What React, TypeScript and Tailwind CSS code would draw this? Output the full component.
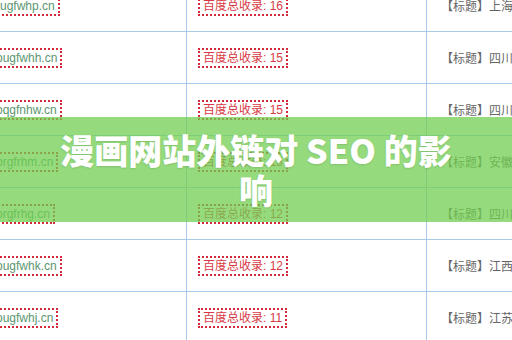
const rows = [
  { domain: "rugfwhp.cn", count: 16, title: "上海漫画网站外链" },
  { domain: "ougfwhh.cn", count: 15, title: "四川漫画网站外链" },
  { domain: "oqgfnhw.cn", count: 15, title: "四川漫画网站外链" },
  { domain: "orgfrhm.cn", count: 13, title: "安徽漫画网站外链" },
  { domain: "orgfrhg.cn", count: 12, title: "四川漫画网站外链" },
  { domain: "ougfwhk.cn", count: 12, title: "江西漫画网站外链" },
  { domain: "ougfwhj.cn", count: 11, title: "江苏漫画网站外链" },
]

export default function App() {
  return (
    <div className="relative w-[512px] h-[340px] overflow-hidden bg-white font-['Liberation_Sans','Noto_Sans_CJK_SC',sans-serif]">
      <div className="-mt-[20px] flex flex-col">
        {rows.map((row, i) => (
          <div key={i} className="grid grid-cols-[187px_240px_1fr] h-[52px] border-b border-[#a9c9ea]">
            <div className="flex items-center overflow-hidden border-r border-[#a9c9ea]">
              <span className="-ml-[9px] border-2 border-dotted border-[#d3293b] px-[3px] text-[12px] leading-[16px] text-[#5c956f] whitespace-nowrap">
                {row.domain}
              </span>
            </div>
            <div className="flex items-center pl-[11px] border-r border-[#a9c9ea]">
              <span className="border-2 border-dotted border-[#d3293b] px-[3px] text-[12px] leading-[16px] text-[#d83a45] whitespace-nowrap">
                百度总收录: {row.count}
              </span>
            </div>
            <div className="flex items-center pl-[14px] overflow-hidden">
              <span className="text-[12px] text-[#666] whitespace-nowrap font-['Noto_Sans_CJK_SC',sans-serif]">
                【标题】{row.title}
              </span>
            </div>
          </div>
        ))}
      </div>

      <div className="absolute inset-x-0 top-[117px] h-[105px] bg-[rgba(112,206,80,0.74)] flex items-center justify-center px-12">
        <h1 className="text-center text-white text-[34px] leading-[40px] font-black font-['Noto_Sans_CJK_SC',sans-serif] [text-shadow:0_1px_2px_rgba(0,0,0,0.12)]">
          漫画网站外链对 SEO 的影响
        </h1>
      </div>
    </div>
  )
}
